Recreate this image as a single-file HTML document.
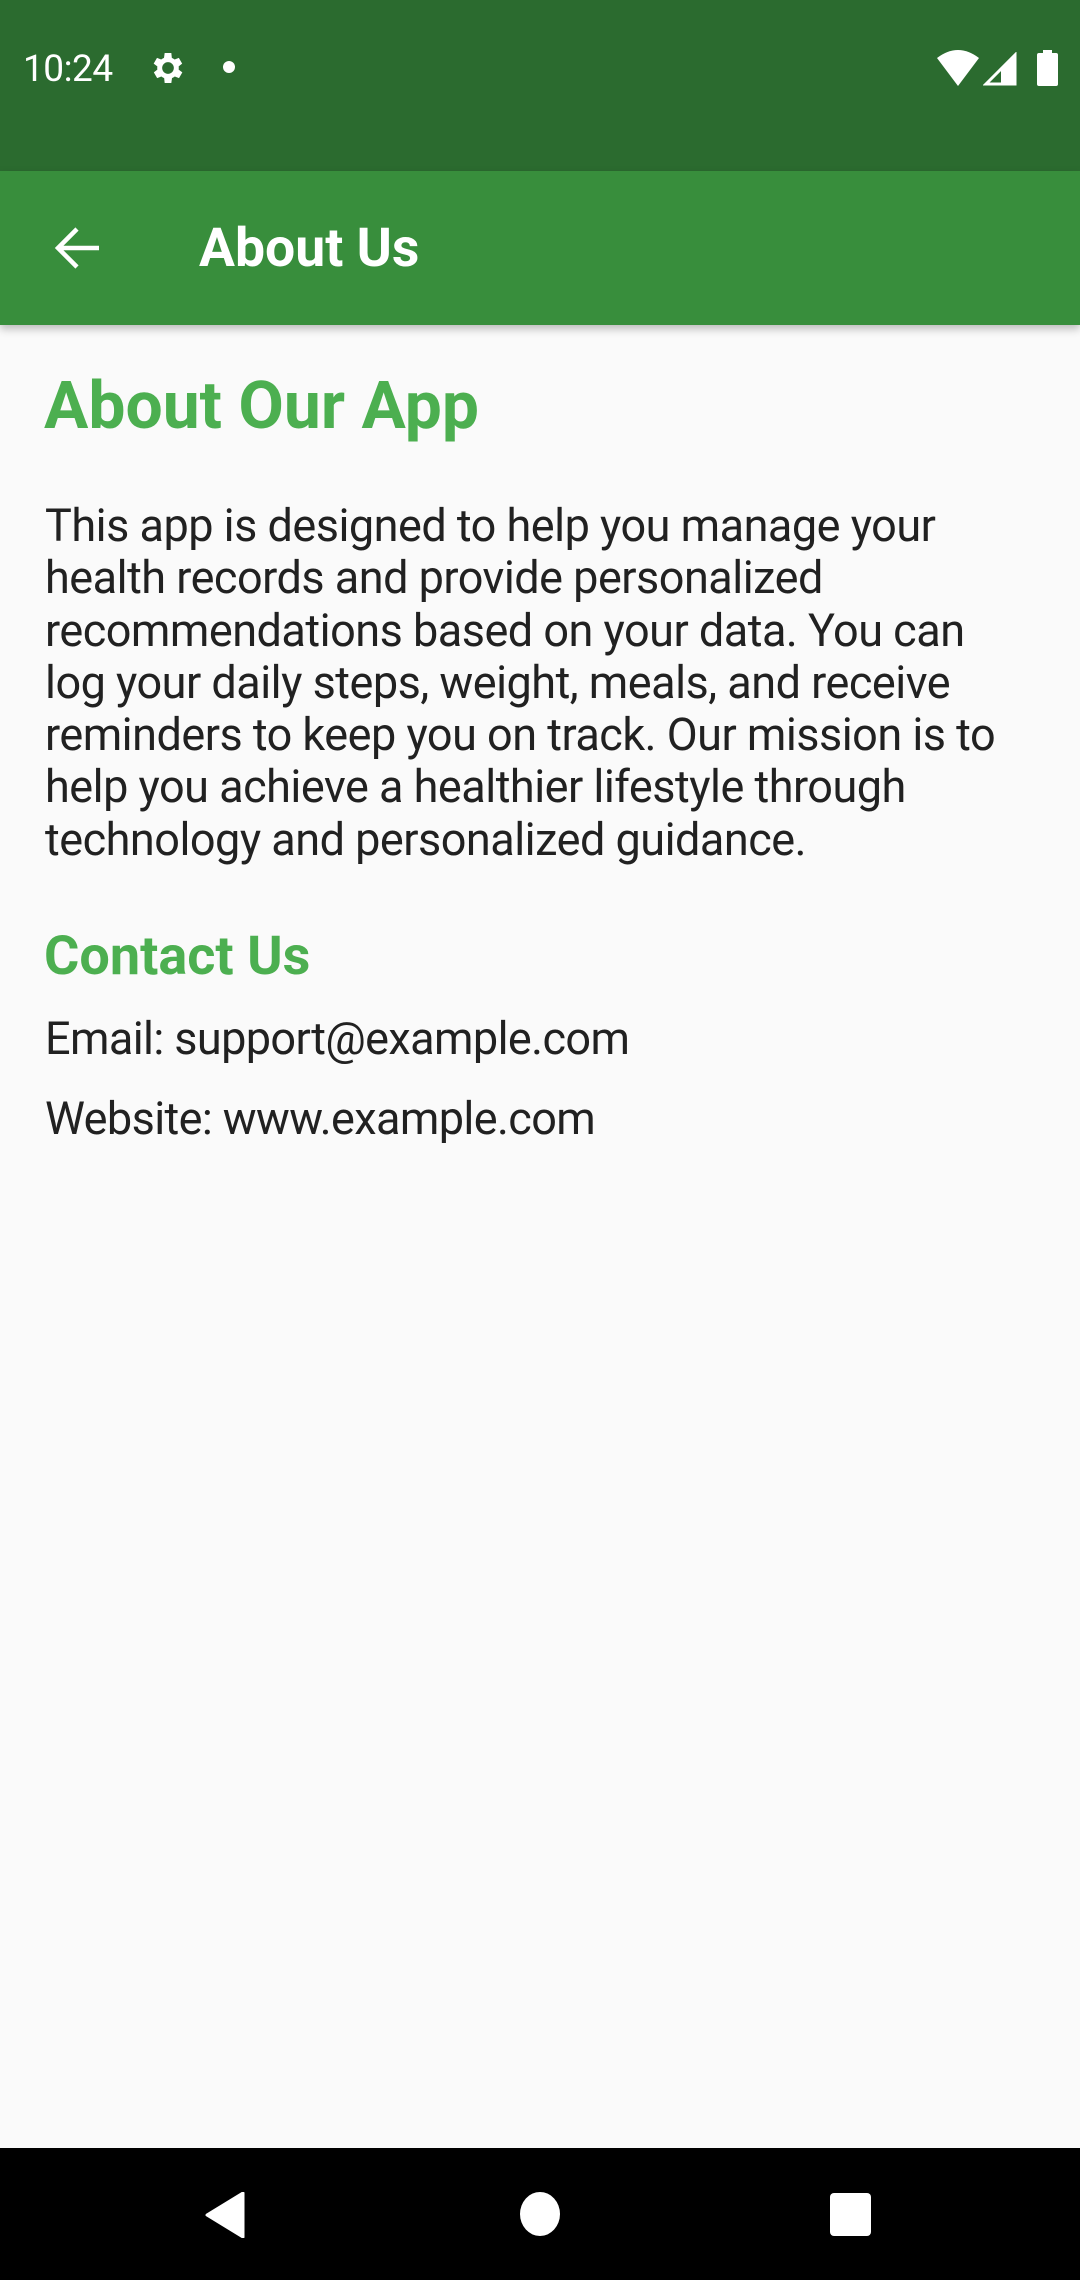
<!DOCTYPE html>
<html><head><meta charset="utf-8"><style>
*{margin:0;padding:0;box-sizing:border-box}
body{width:1080px;height:2280px;background:#fafafa;font-family:"Roboto","Liberation Sans",sans-serif;position:relative;overflow:hidden}
.sb{position:absolute;left:0;top:0;width:1080px;height:171px;background:#2b6b2f}
.ab{position:absolute;left:0;top:171px;width:1080px;height:154px;background:#388e3c;box-shadow:0 4px 8px rgba(0,0,0,0.25)}
.t{position:absolute;white-space:nowrap}
.nav{position:absolute;left:0;top:2148px;width:1080px;height:132px;background:#000}
.body{position:absolute;left:45px;top:500px;font-size:45px;line-height:52.3px;color:#212121;white-space:nowrap;letter-spacing:-0.5px}
</style></head><body>
<div class="sb"></div>
<div class="t" style="left:23px;top:48px;font-size:37px;color:#fff;letter-spacing:-0.5px">10:24</div>
<svg style="position:absolute;left:148px;top:48px" width="40" height="40" viewBox="0 0 24 24"><path fill="#fff" d="M19.4 13a7.5 7.5 0 0 0 0-2l2.1-1.6-2-3.5-2.5 1a7 7 0 0 0-1.7-1L15 3h-4l-.4 2.9a7 7 0 0 0-1.7 1l-2.5-1-2 3.5L6.6 11a7.5 7.5 0 0 0 0 2l-2.1 1.6 2 3.5 2.5-1a7 7 0 0 0 1.7 1L11 21h4l.4-2.9a7 7 0 0 0 1.7-1l2.5 1 2-3.5zM13 15.5a3.5 3.5 0 1 1 0-7 3.5 3.5 0 0 1 0 7z" transform="translate(-1 0)"/></svg>
<div style="position:absolute;left:223px;top:61px;width:12px;height:12px;border-radius:50%;background:#fff"></div>
<svg style="position:absolute;left:937px;top:50px" width="42" height="36" viewBox="0 0 42 36"><path fill="#fff" d="M21 36L0 8Q21-8 42 8z"/></svg>
<svg style="position:absolute;left:983px;top:52px" width="34" height="34" viewBox="0 0 34 34"><path fill="none" stroke="#fff" stroke-width="3" d="M3 32L32 3V32z"/><path fill="#fff" d="M18 32V17L32 3V32z"/></svg>
<svg style="position:absolute;left:1037px;top:50px" width="21" height="36" viewBox="0 0 21 36"><rect x="6" y="0" width="9" height="4" fill="#fff"/><rect x="0" y="3" width="21" height="33" rx="2" fill="#fff"/></svg>
<div class="ab"></div>
<svg style="position:absolute;left:53px;top:226px" width="48" height="44" viewBox="0 0 48 44"><path fill="none" stroke="#fff" stroke-width="4.5" d="M46 22H6M24 3L5 22l19 19"/></svg>
<div class="t" style="left:199px;top:217px;font-size:53.5px;font-weight:bold;color:#fff">About Us</div>
<div class="t" style="left:44px;top:368px;font-size:66px;font-weight:bold;color:#4caf50">About Our App</div>
<div class="body">This app is designed to help you manage your<br>health records and provide personalized<br>recommendations based on your data. You can<br>log your daily steps, weight, meals, and receive<br>reminders to keep you on track. Our mission is to<br>help you achieve a healthier lifestyle through<br>technology and personalized guidance.</div>
<div class="t" style="left:44px;top:925px;font-size:54px;font-weight:bold;color:#4caf50">Contact Us</div>
<div class="t" style="left:45px;top:1012px;font-size:45px;color:#212121;letter-spacing:-0.6px">Email: support@example.com</div>
<div class="t" style="left:45px;top:1092px;font-size:45px;color:#212121;letter-spacing:-0.6px">Website: www.example.com</div>
<div class="nav"></div>
<svg style="position:absolute;left:205px;top:2192px" width="42" height="46" viewBox="0 0 42 46"><path fill="#fff" d="M38 1V45L2 23z" stroke="#fff" stroke-linejoin="round" stroke-width="3"/></svg>
<div style="position:absolute;left:520px;top:2192px;width:40px;height:44px;border-radius:50%;background:#fff"></div>
<div style="position:absolute;left:830px;top:2193px;width:41px;height:43px;border-radius:4px;background:#fff"></div>
</body></html>
